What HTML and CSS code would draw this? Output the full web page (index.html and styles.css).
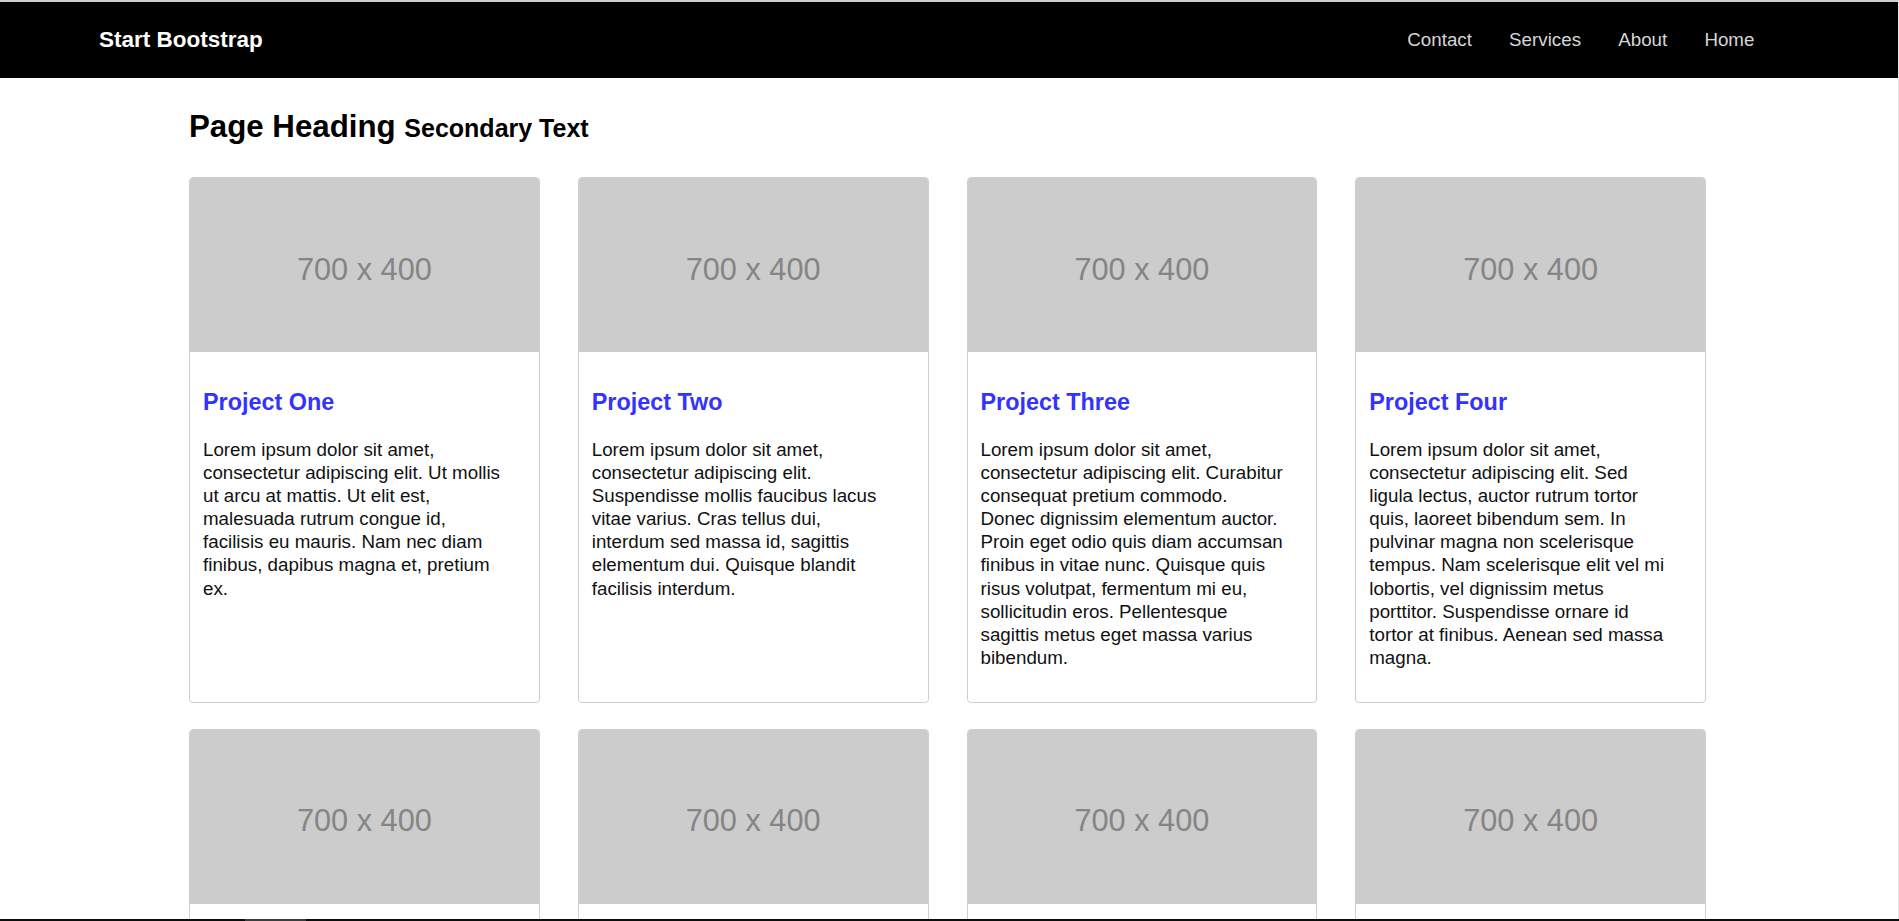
FILE: index.html
```html
<!DOCTYPE html>
<html lang="en">
<head>
<meta charset="utf-8">
<title>Start Bootstrap</title>
<link rel="stylesheet" href="styles.css">
</head>
<body>
<nav class="navbar">
  <a class="brand" href="#">Start Bootstrap</a>
  <ul class="nav-links">
    <li><a href="#">Contact</a></li>
    <li><a href="#">Services</a></li>
    <li><a href="#">About</a></li>
    <li><a href="#">Home</a></li>
  </ul>
</nav>

<main class="container">
  <h1 class="page-heading">Page Heading <small>Secondary Text</small></h1>

  <div class="grid">
    <div class="card">
      <div class="card-img"><span>700 x 400</span></div>
      <div class="card-body">
        <h4 class="card-title"><a href="#">Project One</a></h4>
        <p>Lorem ipsum dolor sit amet, consectetur adipiscing elit. Ut mollis ut arcu at mattis. Ut elit est, malesuada rutrum congue id, facilisis eu mauris. Nam nec diam finibus, dapibus magna et, pretium ex.</p>
      </div>
    </div>
    <div class="card">
      <div class="card-img"><span>700 x 400</span></div>
      <div class="card-body">
        <h4 class="card-title"><a href="#">Project Two</a></h4>
        <p>Lorem ipsum dolor sit amet, consectetur adipiscing elit. Suspendisse mollis faucibus lacus vitae varius. Cras tellus dui, interdum sed massa id, sagittis elementum dui. Quisque blandit facilisis interdum.</p>
      </div>
    </div>
    <div class="card">
      <div class="card-img"><span>700 x 400</span></div>
      <div class="card-body">
        <h4 class="card-title"><a href="#">Project Three</a></h4>
        <p>Lorem ipsum dolor sit amet, consectetur adipiscing elit. Curabitur consequat pretium commodo. Donec dignissim elementum auctor. Proin eget odio quis diam accumsan finibus in vitae nunc. Quisque quis risus volutpat, fermentum mi eu, sollicitudin eros. Pellentesque sagittis metus eget massa varius bibendum.</p>
      </div>
    </div>
    <div class="card">
      <div class="card-img"><span>700 x 400</span></div>
      <div class="card-body">
        <h4 class="card-title"><a href="#">Project Four</a></h4>
        <p>Lorem ipsum dolor sit amet, consectetur adipiscing elit. Sed ligula lectus, auctor rutrum tortor quis, laoreet bibendum sem. In pulvinar magna non scelerisque tempus. Nam scelerisque elit vel mi lobortis, vel dignissim metus porttitor. Suspendisse ornare id tortor at finibus. Aenean sed massa magna.</p>
      </div>
    </div>
    <div class="card">
      <div class="card-img"><span>700 x 400</span></div>
      <div class="card-body">
        <h4 class="card-title"><a href="#">Project Five</a></h4>
        <p>Lorem ipsum dolor sit amet, consectetur adipiscing elit. Nam viverra euismod odio, gravida pellentesque urna varius vitae.</p>
      </div>
    </div>
    <div class="card">
      <div class="card-img"><span>700 x 400</span></div>
      <div class="card-body">
        <h4 class="card-title"><a href="#">Project Six</a></h4>
        <p>Lorem ipsum dolor sit amet, consectetur adipiscing elit. Nam viverra euismod odio, gravida pellentesque urna varius vitae.</p>
      </div>
    </div>
    <div class="card">
      <div class="card-img"><span>700 x 400</span></div>
      <div class="card-body">
        <h4 class="card-title"><a href="#">Project Seven</a></h4>
        <p>Lorem ipsum dolor sit amet, consectetur adipiscing elit. Nam viverra euismod odio, gravida pellentesque urna varius vitae.</p>
      </div>
    </div>
    <div class="card">
      <div class="card-img"><span>700 x 400</span></div>
      <div class="card-body">
        <h4 class="card-title"><a href="#">Project Eight</a></h4>
        <p>Lorem ipsum dolor sit amet, consectetur adipiscing elit. Nam viverra euismod odio, gravida pellentesque urna varius vitae.</p>
      </div>
    </div>
  </div>
</main>

<div class="edge-right"></div>
<div class="hscroll"><div class="hscroll-thumb"></div></div>
</body>
</html>
```

FILE: styles.css
```css
* {
  box-sizing: border-box;
}

html, body {
  margin: 0;
  padding: 0;
}

body {
  font-family: "Liberation Sans", Arial, Helvetica, sans-serif;
  font-size: 18.75px;
  line-height: 23.1px;
  color: #111;
  background: #fff;
  border-top: 2px solid #cfcfcf;
}

a {
  text-decoration: none;
}

.navbar {
  display: flex;
  align-items: center;
  justify-content: space-between;
  height: 76px;
  background: #000;
  padding: 0 126px 0 80px;
}

.brand {
  display: block;
  color: #fff;
  font-weight: bold;
  font-size: 22.5px;
  line-height: 26px;
  padding: 0 19px;
}

.nav-links {
  display: flex;
  list-style: none;
  margin: 0;
  padding: 0;
}

.nav-links a {
  display: block;
  color: #d6d6d6;
  font-size: 18.75px;
  line-height: 24px;
  padding: 0 18.6px;
}

.container {
  width: 1517px;
  margin: 0 0 0 189px;
  padding-bottom: 40px;
}

.page-heading {
  margin: 32px 0 32px;
  font-size: 31.25px;
  line-height: 34px;
  font-weight: bold;
  color: #000;
}

.page-heading small {
  font-size: 25px;
  font-weight: bold;
}

.grid {
  display: grid;
  grid-template-columns: repeat(4, 1fr);
  column-gap: 38px;
  row-gap: 26px;
}

.card {
  border: 1px solid #cfcfcf;
  border-radius: 4px;
  overflow: hidden;
  background: #fff;
}

.card-img {
  height: 175px;
  margin: -1px -1px 0;
  background: #cccccc;
  display: flex;
  align-items: center;
  justify-content: center;
  padding-top: 10px;
}

.card-img span {
  color: #858585;
  font-size: 30.7px;
  line-height: 34px;
}

.card-body {
  padding: 37px 33px 33px 13px;
}

.card-title {
  margin: 0 0 23px;
  font-size: 23.4px;
  line-height: 26px;
  font-weight: bold;
  white-space: nowrap;
}

.card-title a {
  color: #3333ff;
}

.card-body p {
  margin: 0;
}

.edge-right {
  position: fixed;
  top: 0;
  right: 0;
  bottom: 0;
  width: 1px;
  background: #e4e4e4;
}

.hscroll {
  position: fixed;
  left: 0;
  right: 0;
  bottom: 0;
  height: 2px;
  background: #0c0c0c;
}

.hscroll-thumb {
  width: 61px;
  height: 2px;
  margin-left: 245px;
  background: #3c3c3c;
}
```
